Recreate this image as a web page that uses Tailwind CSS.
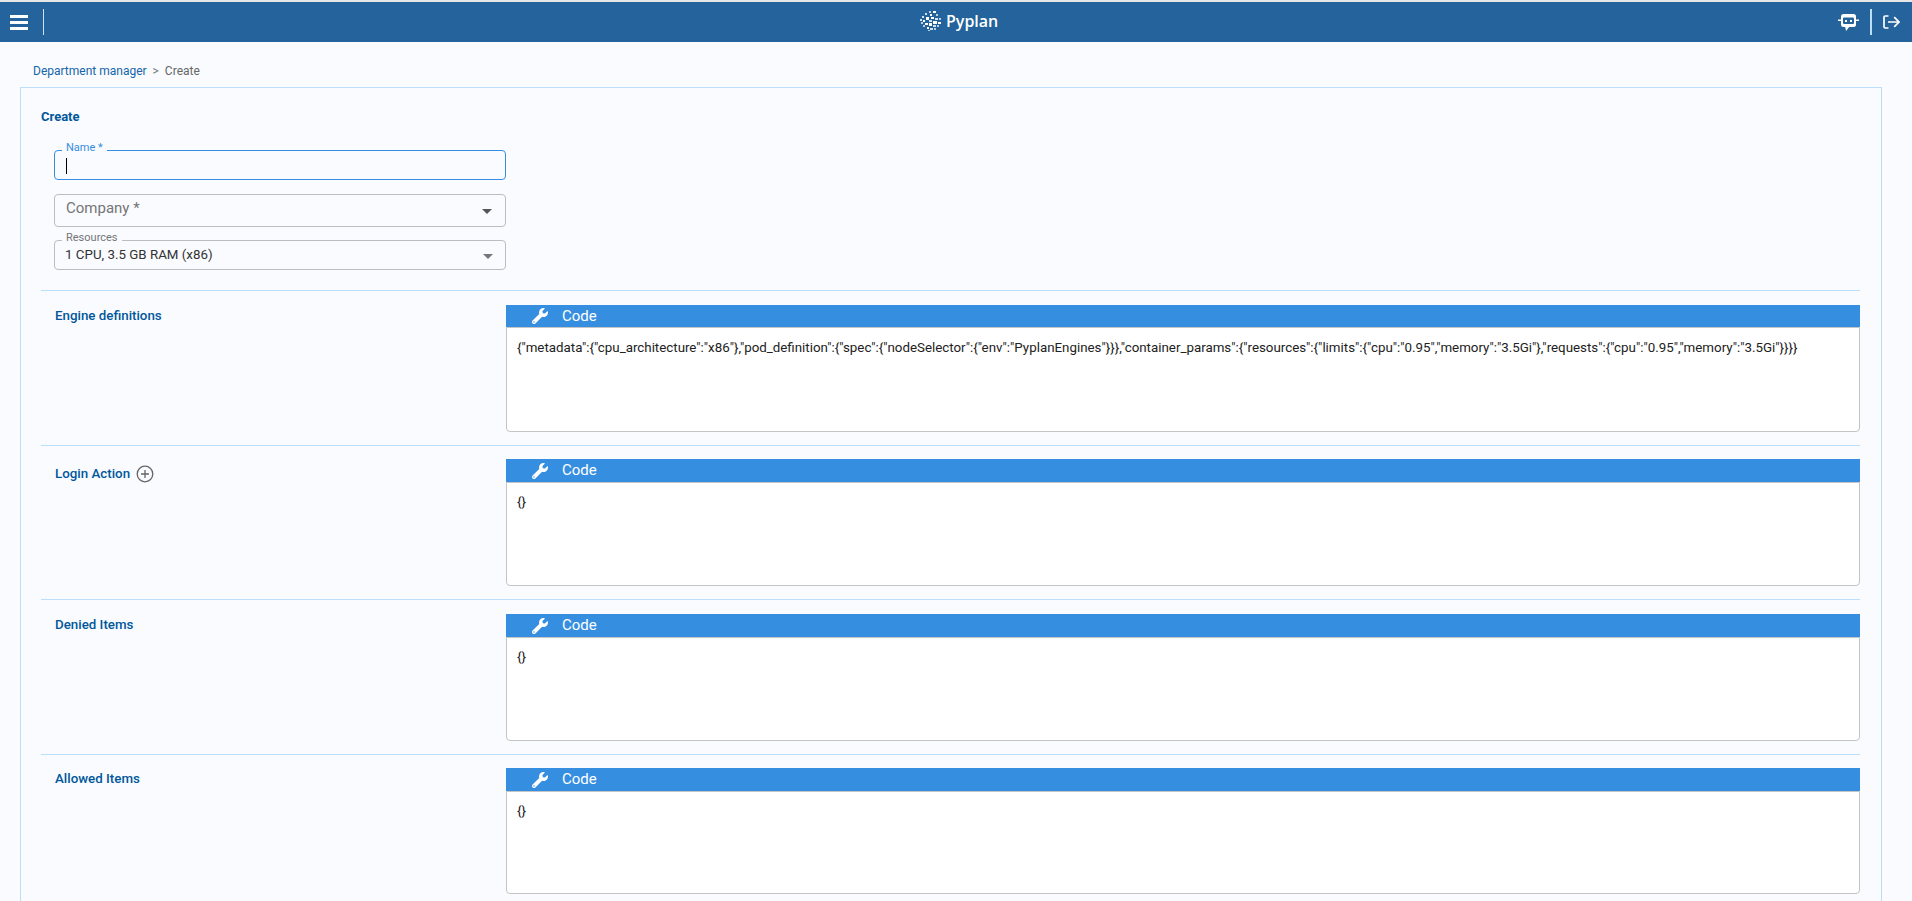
<!DOCTYPE html>
<html lang="en">

<head>
    <meta charset="UTF-8" />
    <title>Pyplan - Department manager</title>
    <script src="https://cdn.jsdelivr.net/npm/@tailwindcss/browser@4"></script>
</head>

<body class="h-[901px] overflow-hidden bg-[#f9fbff] font-['Roboto',sans-serif]">
    <div class="h-[2px] bg-[#e6e6e6]"></div>

    <!-- Top bar -->
    <header class="relative h-10 bg-[#24639b] flex items-center text-white">
        <div class="w-[43px] pl-[10px] flex flex-col gap-[3px]">
            <span class="block w-[18px] h-[3px] bg-white"></span>
            <span class="block w-[18px] h-[3px] bg-white"></span>
            <span class="block w-[18px] h-[3px] bg-white"></span>
        </div>
        <div class="w-px h-[26px] bg-white/80"></div>

        <div class="absolute left-[920px] top-0 h-10 pb-[2px] flex items-center gap-[4px]">
            <svg width="22" height="20" viewBox="0 0 22 20" fill="#fff">
                <rect x="9" y="0" width="2" height="2" opacity=".7" /><rect x="13" y="0" width="3" height="2" />
                <rect x="5" y="2" width="2" height="2" opacity=".8" /><rect x="10" y="3" width="2" height="2" />
                <rect x="16" y="3" width="2" height="2" opacity=".7" /><rect x="2" y="5" width="2" height="2" opacity=".8" />
                <rect x="6" y="6" width="3" height="3" /><rect x="11" y="6" width="3" height="2" />
                <rect x="15" y="7" width="3" height="2" opacity=".8" /><rect x="19" y="7" width="2" height="2" opacity=".7" />
                <rect x="0" y="8" width="2" height="2" opacity=".8" /><rect x="3" y="9" width="2" height="2" />
                <rect x="9" y="9" width="3" height="2" opacity=".8" /><rect x="13" y="10" width="4" height="3" />
                <rect x="18" y="11" width="3" height="2" /><rect x="1" y="11" width="2" height="2" opacity=".7" />
                <rect x="5" y="12" width="3" height="2" /><rect x="9" y="12" width="3" height="3" />
                <rect x="3" y="14" width="2" height="2" opacity=".7" /><rect x="13" y="14" width="3" height="2" opacity=".8" />
                <rect x="17" y="14" width="2" height="2" opacity=".7" /><rect x="7" y="16" width="2" height="2" />
                <rect x="10" y="17" width="3" height="2" opacity=".8" /><rect x="14" y="17" width="2" height="2" opacity=".7" />
                <rect x="8" y="19" width="2" height="1" opacity=".7" />
            </svg>
            <span class="font-['Open_Sans',sans-serif] font-semibold text-base leading-none">Pyplan</span>
        </div>

        <div class="ml-auto flex items-center">
            <svg class="mr-[10px]" width="22" height="17" viewBox="0 0 22 17" fill="#fff">
                <rect x="3" y="0" width="15" height="13" rx="2.5" />
                <path d="M7 12h5l-4 5z" />
                <rect x="0" y="5.5" width="3" height="1.5" /><rect x="18" y="5.5" width="3" height="1.5" />
                <rect x="5" y="3.5" width="11" height="6.5" rx="1" fill="#24639b" />
                <rect x="7" y="6" width="2" height="2" /><rect x="12" y="6" width="2" height="2" />
            </svg>
            <div class="w-[2px] h-[26px] bg-[#bbdefb]"></div>
            <svg class="ml-[11px] mr-[12px]" width="17" height="14" viewBox="0 0 17 14" fill="none" stroke="#fff" stroke-width="1.7">
                <path d="M5.5 1H2.2C1.5 1 1 1.5 1 2.2v9.6c0 .7.5 1.2 1.2 1.2h3.3" />
                <path d="M5 7h11M11.2 2.2 16 7l-4.8 4.8" />
            </svg>
        </div>
    </header>

    <!-- Breadcrumb -->
    <nav class="h-[45px] pl-[33px] pt-[13px] flex items-center text-xs">
        <a class="text-[#1565a8]">Department manager</a>
        <span class="mx-[6px] text-[#777]">&gt;</span>
        <span class="text-[#666]">Create</span>
    </nav>

    <!-- Form card -->
    <main class="ml-5 mr-[30px] h-[814px] overflow-hidden border border-b-0 border-[#bbdefb] pl-5 pr-[21px] pt-[19px]">
        <h2 class="h-5 leading-5 text-[13px] font-bold text-[#01579b]">Create</h2>

        <div class="ml-[13px] mt-[23px] w-[452px]">
            <div class="relative h-[30px] rounded-[4px] border border-[#368ee0]">
                <label class="absolute left-[7px] -top-[10px] px-1 bg-[#f9fbff] text-[11px] leading-[14px] text-[#368ee0]">Name *</label>
                <span class="absolute left-[11px] top-[7px] w-px h-4 bg-black"></span>
            </div>
            <div class="mt-[14px] h-[33px] pl-[11px] pr-[13px] pb-[4px] rounded-[4px] border border-[#bdbdbd] flex items-center justify-between">
                <span class="text-[15px] text-[#757575]">Company *</span>
                <span class="mt-[6px] border-x-[5px] border-t-[5px] border-x-transparent border-t-[#555]"></span>
            </div>
            <div class="relative mt-[13px] h-[30px] pl-[10px] pr-3 rounded-[4px] border border-[#bdbdbd] flex items-center justify-between">
                <label class="absolute left-[7px] -top-[10px] px-1 bg-[#f9fbff] text-[11px] leading-[14px] text-[#757575]">Resources</label>
                <span class="text-[13.33px] text-[#333]">1 CPU, 3.5 GB RAM (x86)</span>
                <span class="mt-[3px] border-x-[5px] border-t-[5px] border-x-transparent border-t-[#777]"></span>
            </div>
        </div>

        <!-- Engine definitions -->
        <section class="mt-5 h-[155px] border-t border-[#bbdefb] pt-[14px] flex">
            <div class="w-[465px] pl-[14px] pt-[1px] text-[13.33px] leading-5 font-medium text-[#01579b]">Engine definitions</div>
            <div class="flex-1 min-w-0">
                <div class="h-[22px] bg-[#368ee0] pl-[26px] flex items-center text-white text-[15px]">
                    <svg class="w-4 h-4 mr-[14px]" viewBox="0 0 512 512" fill="#fff"><path d="M507.73 109.1c-2.24-9.03-13.54-12.09-20.12-5.51l-74.36 74.36-67.88-11.31-11.31-67.88 74.36-74.36c6.62-6.62 3.43-17.9-5.66-20.16-47.38-11.74-99.55.91-136.58 37.93-39.64 39.64-50.55 97.1-34.05 147.2L18.74 402.76c-24.99 24.99-24.99 65.51 0 90.5 24.99 24.99 65.51 24.99 90.5 0l213.21-213.21c50.12 16.71 107.47 5.68 147.37-34.22 37.07-37.07 49.7-89.32 37.91-136.73zM64 472c-13.25 0-24-10.75-24-24 0-13.26 10.75-24 24-24s24 10.74 24 24c0 13.25-10.75 24-24 24z" /></svg>
                    Code
                </div>
                <div class="h-[105px] bg-white border border-[#c4c4c4] rounded-b-[4px] px-[10px] pt-[11px] text-[13.33px] leading-[18px] text-[#222] whitespace-nowrap">{"metadata":{"cpu_architecture":"x86"},"pod_definition":{"spec":{"nodeSelector":{"env":"PyplanEngines"}}},"container_params":{"resources":{"limits":{"cpu":"0.95","memory":"3.5Gi"},"requests":{"cpu":"0.95","memory":"3.5Gi"}}}}</div>
            </div>
        </section>

        <!-- Login Action -->
        <section class="h-[154px] border-t border-[#bbdefb] pt-[13px] flex">
            <div class="w-[465px] pl-[14px] pt-[5px] flex items-start gap-[6px] text-[13.33px] leading-5 font-medium text-[#01579b]">
                Login Action
                <svg class="mt-[1px]" width="18" height="18" viewBox="0 0 18 18" fill="none" stroke="#666" stroke-width="1.3"><circle cx="9" cy="9" r="7.8" /><path d="M9 5v8M5 9h8" /></svg>
            </div>
            <div class="flex-1 min-w-0">
                <div class="h-[23px] bg-[#368ee0] pl-[26px] flex items-center text-white text-[15px]">
                    <svg class="w-4 h-4 mr-[14px]" viewBox="0 0 512 512" fill="#fff"><path d="M507.73 109.1c-2.24-9.03-13.54-12.09-20.12-5.51l-74.36 74.36-67.88-11.31-11.31-67.88 74.36-74.36c6.62-6.62 3.43-17.9-5.66-20.16-47.38-11.74-99.55.91-136.58 37.93-39.64 39.64-50.55 97.1-34.05 147.2L18.74 402.76c-24.99 24.99-24.99 65.51 0 90.5 24.99 24.99 65.51 24.99 90.5 0l213.21-213.21c50.12 16.71 107.47 5.68 147.37-34.22 37.07-37.07 49.7-89.32 37.91-136.73zM64 472c-13.25 0-24-10.75-24-24 0-13.26 10.75-24 24-24s24 10.74 24 24c0 13.25-10.75 24-24 24z" /></svg>
                    Code
                </div>
                <div class="h-[104px] bg-white border border-[#c4c4c4] rounded-b-[4px] px-[10px] pt-[10px] text-[13.33px] leading-[18px] text-[#222]">{}</div>
            </div>
        </section>

        <!-- Denied Items -->
        <section class="h-[155px] border-t border-[#bbdefb] pt-[14px] flex">
            <div class="w-[465px] pl-[14px] pt-[1px] text-[13.33px] leading-5 font-medium text-[#01579b]">Denied Items</div>
            <div class="flex-1 min-w-0">
                <div class="h-[23px] bg-[#368ee0] pl-[26px] flex items-center text-white text-[15px]">
                    <svg class="w-4 h-4 mr-[14px]" viewBox="0 0 512 512" fill="#fff"><path d="M507.73 109.1c-2.24-9.03-13.54-12.09-20.12-5.51l-74.36 74.36-67.88-11.31-11.31-67.88 74.36-74.36c6.62-6.62 3.43-17.9-5.66-20.16-47.38-11.74-99.55.91-136.58 37.93-39.64 39.64-50.55 97.1-34.05 147.2L18.74 402.76c-24.99 24.99-24.99 65.51 0 90.5 24.99 24.99 65.51 24.99 90.5 0l213.21-213.21c50.12 16.71 107.47 5.68 147.37-34.22 37.07-37.07 49.7-89.32 37.91-136.73zM64 472c-13.25 0-24-10.75-24-24 0-13.26 10.75-24 24-24s24 10.74 24 24c0 13.25-10.75 24-24 24z" /></svg>
                    Code
                </div>
                <div class="h-[104px] bg-white border border-[#c4c4c4] rounded-b-[4px] px-[10px] pt-[10px] text-[13.33px] leading-[18px] text-[#222]">{}</div>
            </div>
        </section>

        <!-- Allowed Items -->
        <section class="h-[147px] border-t border-[#bbdefb] pt-[13px] flex">
            <div class="w-[465px] pl-[14px] pt-[1px] text-[13.33px] leading-5 font-medium text-[#01579b]">Allowed Items</div>
            <div class="flex-1 min-w-0">
                <div class="h-[23px] bg-[#368ee0] pl-[26px] flex items-center text-white text-[15px]">
                    <svg class="w-4 h-4 mr-[14px]" viewBox="0 0 512 512" fill="#fff"><path d="M507.73 109.1c-2.24-9.03-13.54-12.09-20.12-5.51l-74.36 74.36-67.88-11.31-11.31-67.88 74.36-74.36c6.62-6.62 3.43-17.9-5.66-20.16-47.38-11.74-99.55.91-136.58 37.93-39.64 39.64-50.55 97.1-34.05 147.2L18.74 402.76c-24.99 24.99-24.99 65.51 0 90.5 24.99 24.99 65.51 24.99 90.5 0l213.21-213.21c50.12 16.71 107.47 5.68 147.37-34.22 37.07-37.07 49.7-89.32 37.91-136.73zM64 472c-13.25 0-24-10.75-24-24 0-13.26 10.75-24 24-24s24 10.74 24 24c0 13.25-10.75 24-24 24z" /></svg>
                    Code
                </div>
                <div class="h-[103px] bg-white border border-[#c4c4c4] rounded-b-[4px] px-[10px] pt-[10px] text-[13.33px] leading-[18px] text-[#222]">{}</div>
            </div>
        </section>
    </main>
</body>

</html>
